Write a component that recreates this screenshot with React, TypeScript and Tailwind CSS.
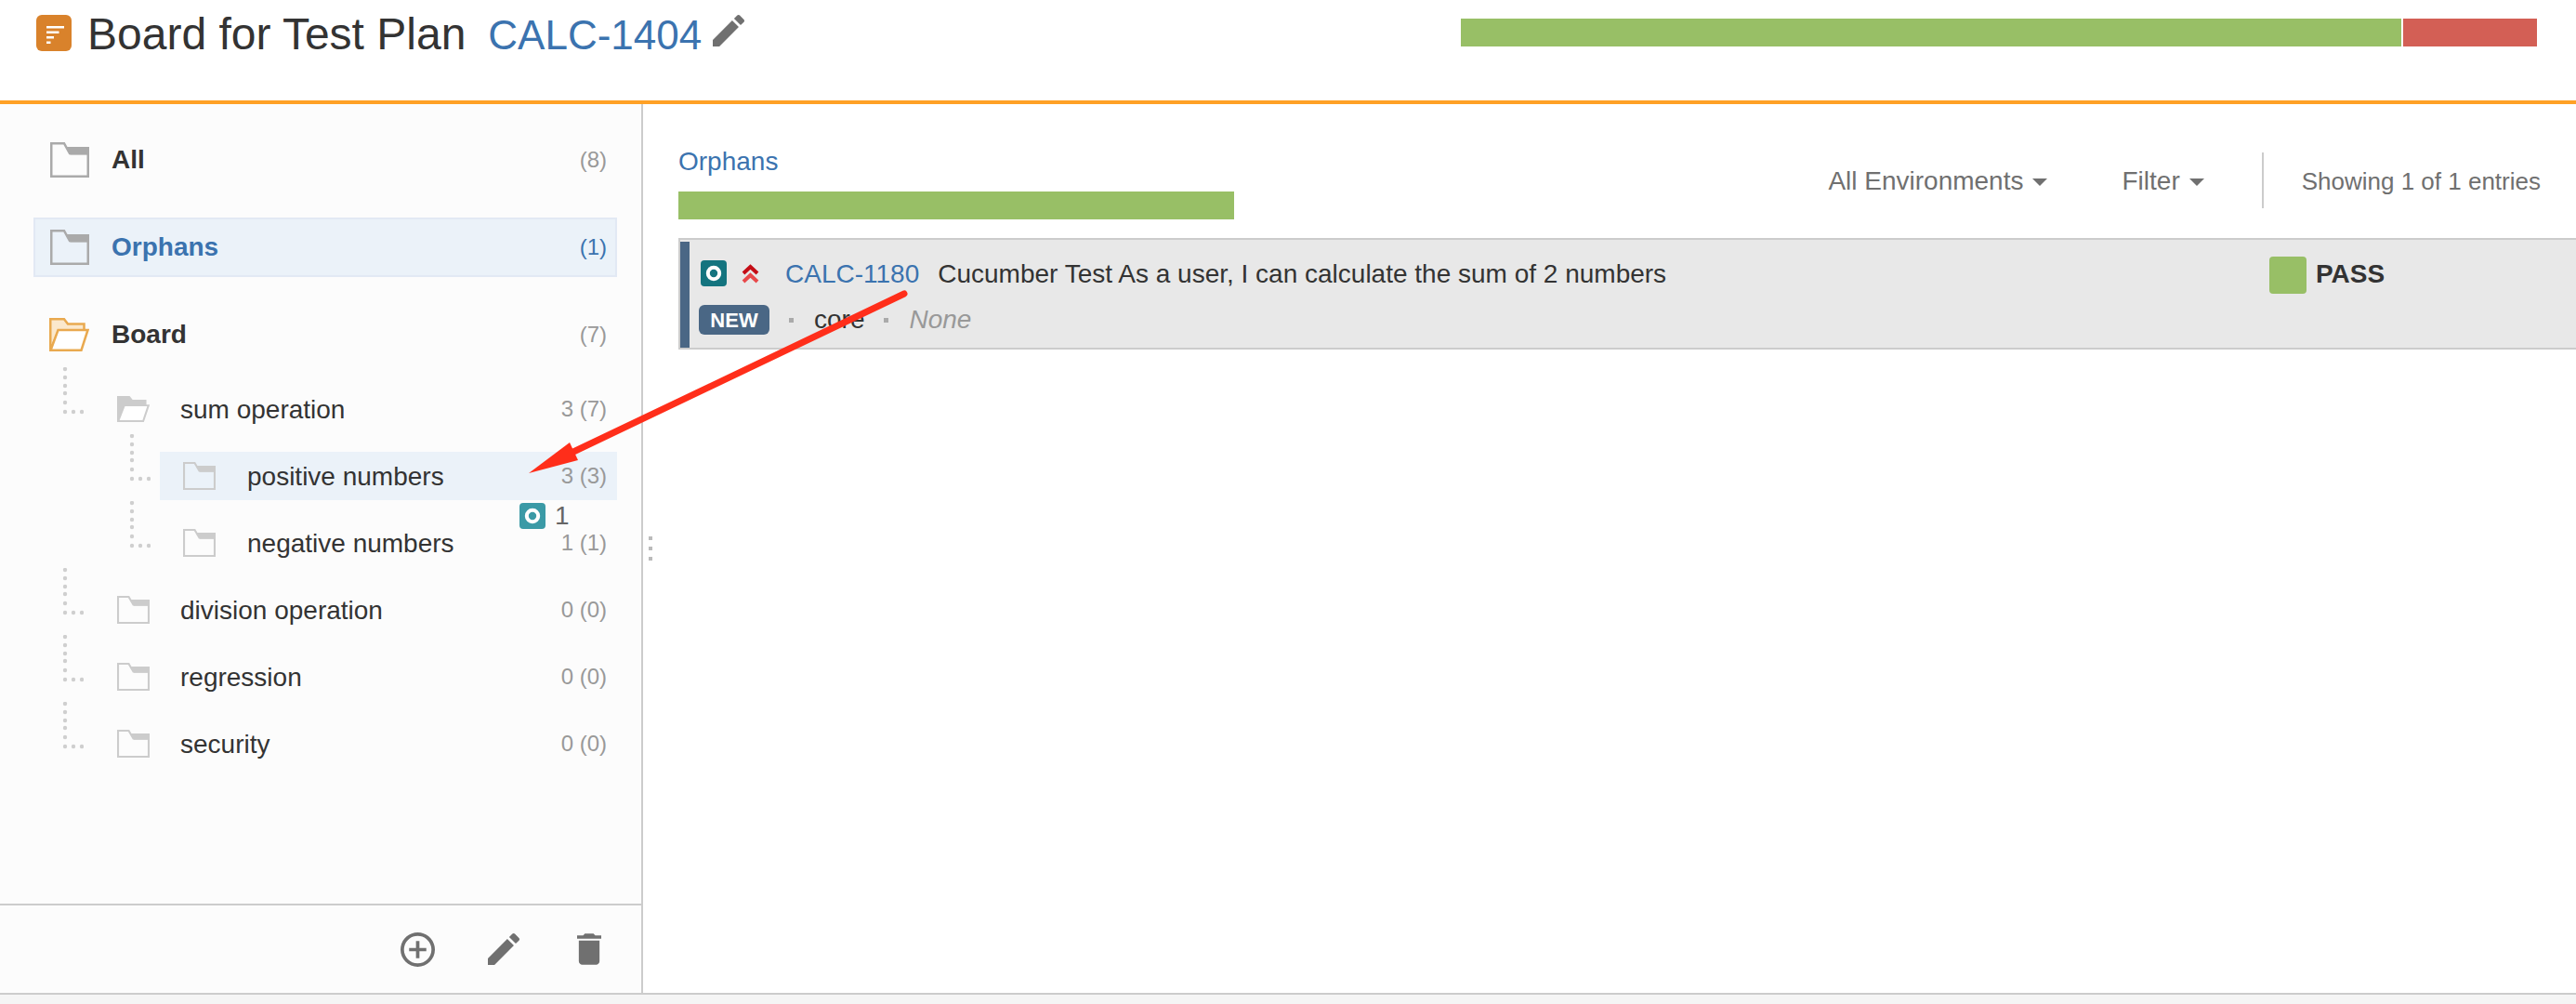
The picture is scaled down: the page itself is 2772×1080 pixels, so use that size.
import React from 'react';

const EDIT_PATH =
  'M3 17.25V21h3.75L17.81 9.94l-3.75-3.75L3 17.25zM20.71 7.04c.39-.39.39-1.02 0-1.41l-2.34-2.34c-.39-.39-1.02-.39-1.41 0l-1.83 1.83 3.75 3.75 1.83-1.83z';

const ClosedFolder = ({ className, color }: { className: string; color: string }) => (
  <svg viewBox="0 0 42 38" preserveAspectRatio="none" className={className} fill="none">
    <path d="M1.25 1.25H15L21 12H40.75V36.75H1.25Z" stroke={color} strokeWidth="2.5" />
    <path d="M17 5H42V13.5H21.5Z" fill={color} />
  </svg>
);

const OpenFolder = ({ className, stroke, back }: { className: string; stroke: string; back: string }) => (
  <svg viewBox="0 0 43 36" preserveAspectRatio="none" className={className}>
    <path d="M1.25 1.25H16L20 6.5H37.5V14H10L1.25 34.75Z" fill={back} stroke={stroke} strokeWidth="2.5" />
    <path d="M9.5 13H41.5L34.5 34.75H1.5Z" fill="#fff" stroke={stroke} strokeWidth="2.5" />
  </svg>
);

const Connector = ({ className }: { className: string }) => (
  <svg viewBox="0 0 24 52" className={className} fill="#cfcfcf">
    {[2, 11, 20, 28, 38, 48].map((y) => (
      <circle key={y} cx="4" cy={y} r="2.2" />
    ))}
    <circle cx="13" cy="48" r="2.2" />
    <circle cx="22" cy="48" r="2.2" />
  </svg>
);

const TestIcon = ({ className }: { className: string }) => (
  <svg viewBox="0 0 28 28" className={className}>
    <rect width="28" height="28" rx="4" fill="currentColor" />
    <circle cx="14" cy="14" r="6.2" fill="none" stroke="#fff" strokeWidth="4" />
  </svg>
);

const Caret = () => (
  <svg viewBox="0 0 16 8" className="w-[16px] h-[8px] ml-[10px] mt-[3px]">
    <path d="M0 0H16L8 8Z" fill="#707070" />
  </svg>
);

const treeRows = [
  { name: 'sum operation', count: '3 (7)', level: 1, open: true },
  { name: 'positive numbers', count: '3 (3)', level: 2, active: true },
  { name: 'negative numbers', count: '1 (1)', level: 2 },
  { name: 'division operation', count: '0 (0)', level: 1 },
  { name: 'regression', count: '0 (0)', level: 1 },
  { name: 'security', count: '0 (0)', level: 1 },
];

const Sidebar = () => (
  <aside className="w-[692px] shrink-0 flex flex-col bg-[#fcfcfc] border-r-2 border-[#cccccc]">
    <div className="flex-1 pt-[28px] pl-[36px] pr-[26px]">
      <div className="flex items-center h-[64px] pl-[18px] pr-[11px] text-[#333333]">
        <ClosedFolder className="w-[42px] h-[38px]" color="#aaaaaa" />
        <span className="ml-[24px] font-bold">All</span>
        <span className="ml-auto text-[24px] text-[#999999]">(8)</span>
      </div>
      <div className="flex items-center h-[64px] mt-[30px] pl-[16px] pr-[9px] bg-[#ebf2f9] border-2 border-[#e2e9f4]">
        <ClosedFolder className="w-[42px] h-[38px]" color="#aaaaaa" />
        <span className="ml-[24px] font-bold text-[#3b73af]">Orphans</span>
        <span className="ml-auto text-[24px] text-[#3b73af]">(1)</span>
      </div>
      <div className="flex items-center h-[64px] mt-[30px] pl-[17px] pr-[11px] text-[#333333]">
        <OpenFolder className="w-[43px] h-[36px]" stroke="#e9a94f" back="#fbe8cc" />
        <span className="ml-[24px] font-bold">Board</span>
        <span className="ml-auto text-[24px] text-[#999999]">(7)</span>
      </div>
      <div className="flex flex-col gap-[20px] mt-[22px]">
        {treeRows.map((row) => (
          <div
            key={row.name}
            className={
              row.level === 1
                ? 'relative flex items-center h-[52px] ml-[56px] pl-[34px] pr-[11px]'
                : row.active
                  ? 'relative flex items-center h-[52px] ml-[136px] pl-[25px] pr-[11px] bg-[#ebf2f9]'
                  : 'relative flex items-center h-[52px] ml-[136px] pl-[25px] pr-[11px]'
            }
          >
            <Connector
              className={
                row.level === 1
                  ? 'absolute left-[-26px] top-[-19px] w-[24px] h-[52px]'
                  : 'absolute left-[-34px] top-[-19px] w-[24px] h-[52px]'
              }
            />
            {row.open ? (
              <OpenFolder className="w-[35px] h-[28px]" stroke="#cccccc" back="#cccccc" />
            ) : (
              <ClosedFolder className="w-[35px] h-[30px]" color="#cccccc" />
            )}
            <span className={row.level === 1 ? 'ml-[33px] pt-[1px] text-[#333333]' : 'ml-[34px] pt-[1px] text-[#333333]'}>
              {row.name}
            </span>
            <span className="ml-auto text-[24px] text-[#999999]">{row.count}</span>
          </div>
        ))}
      </div>
    </div>
    <div className="h-[96px] shrink-0 flex items-center justify-end pr-[43px] border-t-2 border-[#cccccc] text-[#707070]">
      <svg viewBox="2 2 20 20" className="w-[37px] h-[37px]" fill="currentColor">
        <path d="M13 7h-2v4H7v2h4v4h2v-4h4v-2h-4V7zm-1-5C6.48 2 2 6.48 2 12s4.48 10 10 10 10-4.48 10-10S17.52 2 12 2zm0 18c-4.41 0-8-3.59-8-8s3.59-8 8-8 8 3.59 8 8-3.59 8-8 8z" />
      </svg>
      <svg viewBox="3 3 18 18" className="w-[34px] h-[34px] ml-[57px]" fill="currentColor">
        <path d={EDIT_PATH} />
      </svg>
      <svg viewBox="5 3 14 18" className="w-[26px] h-[34px] ml-[62px]" fill="currentColor">
        <path d="M6 19c0 1.1.9 2 2 2h8c1.1 0 2-.9 2-2V7H6v12zM19 4h-3.5l-1-1h-5l-1 1H5v2h14V4z" />
      </svg>
    </div>
  </aside>
);

const Content = () => (
  <main className="flex-1 min-w-0 bg-white">
    <div className="flex justify-between h-[144px] pl-[38px] pr-[38px]">
      <div className="w-[598px] pt-[46px]">
        <div className="text-[#3b73af] h-[32px] leading-[32px]">Orphans</div>
        <div className="h-[30px] mt-[16px] bg-[#98bf66]" />
      </div>
      <div className="flex items-center h-[60px] mt-[52px] text-[#707070]">
        <span className="pt-[2px]">All Environments</span>
        <Caret />
        <span className="ml-[80px] pt-[2px]">Filter</span>
        <Caret />
        <div className="w-[2px] h-[60px] ml-[62px] bg-[#cccccc]" />
        <span className="ml-[41px] pt-[2px] text-[26px]">Showing 1 of 1 entries</span>
      </div>
    </div>
    <div className="flex h-[120px] ml-[38px] bg-[#e8e8e8] border-y-2 border-l-2 border-[#cccccc]">
      <div className="w-[10px] mt-[2px] bg-[#4a6785]" />
      <div className="flex-1 pl-[10px] pt-[20px]">
        <div className="flex items-center h-[32px] pl-[2px]">
          <TestIcon className="w-[28px] h-[28px] text-[#14747f]" />
          <svg viewBox="0 0 19 21" className="w-[19px] h-[21px] ml-[16px]" fill="none" strokeWidth="4">
            <path d="M2 10 9.5 3 17 10" stroke="#c40d16" />
            <path d="M2 19 9.5 12 17 19" stroke="#e8484a" />
          </svg>
          <span className="ml-[28px] pt-[2px] text-[#3b73af]">CALC-1180</span>
          <span className="ml-[20px] pt-[2px] text-[#333333]">Cucumber Test As a user, I can calculate the sum of 2 numbers</span>
        </div>
        <div className="flex items-center h-[32px] mt-[18px]">
          <span className="flex items-center justify-center w-[76px] h-[32px] rounded-[6px] bg-[#4a6785] text-white text-[22px] font-bold">
            NEW
          </span>
          <span className="w-[5px] h-[5px] ml-[21px] bg-[#aaaaaa]" />
          <span className="ml-[22px] text-[#333333]">core</span>
          <span className="w-[5px] h-[5px] ml-[21px] bg-[#aaaaaa]" />
          <span className="ml-[22px] italic text-[#999999]">None</span>
        </div>
      </div>
      <div className="flex w-[330px] pt-[18px]">
        <div className="w-[40px] h-[40px] rounded-[4px] bg-[#98bf66]" />
        <span className="ml-[10px] h-[38px] leading-[38px] font-bold text-[#333333]">PASS</span>
      </div>
    </div>
  </main>
);

export default function App() {
  return (
    <div className="relative flex flex-col w-[2772px] h-[1080px] overflow-hidden bg-white text-[28px] font-['Liberation_Sans',Arial,sans-serif]">
      <header className="flex h-[112px] shrink-0 bg-white border-b-4 border-[#ffa126] pl-[39px] pr-[42px]">
        <svg viewBox="0 0 38 39" className="w-[38px] h-[39px] mt-[16px]">
          <rect width="38" height="39" rx="6" fill="#d9822b" />
          <path d="M11 12H30V14.500H11ZM11 17.500H24.500V20H11ZM11 23H19V25.500H11ZM11 28.500H15.500V31H11Z" fill="#fff" />
        </svg>
        <span className="ml-[17px] h-[48px] mt-[13px] leading-[48px] text-[48px] text-[#333333]">Board for Test Plan</span>
        <span className="ml-[24px] h-[48px] mt-[14px] leading-[48px] text-[44px] text-[#3b73af]">CALC-1404</span>
        <svg viewBox="3 3 18 18" className="w-[34px] h-[34px] ml-[12px] mt-[16px]" fill="#707070">
          <path d={EDIT_PATH} />
        </svg>
        <div className="flex ml-auto h-[30px] mt-[20px] w-[1158px] gap-[2px]">
          <div className="w-[1012px] bg-[#98bf66]" />
          <div className="flex-1 bg-[#d35f55]" />
        </div>
      </header>
      <div className="flex flex-1 min-h-0">
        <Sidebar />
        <Content />
      </div>
      <div className="h-[12px] shrink-0 bg-[#f5f5f5] border-t-2 border-[#cccccc]" />

      <div className="absolute left-[698px] top-[577px] flex flex-col gap-[7px]">
        <div className="w-[4px] h-[4px] bg-[#bbbbbb]" />
        <div className="w-[4px] h-[4px] bg-[#bbbbbb]" />
        <div className="w-[4px] h-[4px] bg-[#bbbbbb]" />
      </div>

      <div className="absolute left-[559px] top-[534px] flex items-center">
        <TestIcon className="w-[28px] h-[28px] text-[#3b9aa6]" />
        <span className="ml-[10px] text-[#666666]">1</span>
      </div>

      <svg viewBox="0 0 2772 1080" className="absolute inset-0 w-[2772px] h-[1080px] pointer-events-none">
        <path d="M973 316 617 486" stroke="#ff2e1a" strokeWidth="7" strokeLinecap="round" />
        <path d="M569 509 613 476 622 495Z" fill="#ff2e1a" />
      </svg>
    </div>
  );
}
